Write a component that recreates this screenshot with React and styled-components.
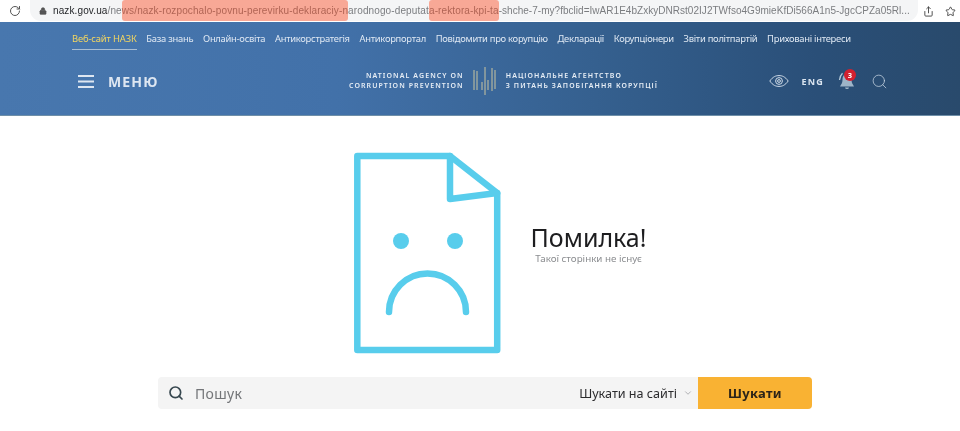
import styled, { createGlobalStyle } from "styled-components";
import { Search, RotateCw, Lock, Share, Star, ChevronDown } from "lucide-react";

const GlobalStyle = createGlobalStyle`
  html, body {
    margin: 0;
    padding: 0;
    background: #ffffff;
  }
  * {
    box-sizing: border-box;
  }
`;

const Page = styled.div`
  width: 960px;
  height: 431px;
  overflow: hidden;
  background: #fff;
  font-family: "Noto Sans", "Open Sans", sans-serif;
  filter: blur(0.3px);
`;

const BrowserBar = styled.div`
  height: 22px;
  display: flex;
  align-items: center;
  padding-left: 9px;
  background: #fff;
  color: #555;
`;

const AddressBar = styled.div`
  width: 888px;
  height: 21px;
  margin-left: 9px;
  padding-left: 9px;
  align-self: flex-start;
  display: flex;
  align-items: center;
  gap: 6px;
  background: #f4f5f6;
  border-radius: 0 0 11px 11px;
  font-family: "Liberation Sans", Arial, sans-serif;
  font-size: 10px;
  letter-spacing: 0.12px;
  white-space: nowrap;
  overflow: hidden;
`;

const Url = styled.span`
  color: #7b7d80;
`;

const Domain = styled.span`
  color: #26282b;
`;

const Marked = styled.span`
  display: inline-block;
  line-height: 21px;
  background: #f8a896;
  color: #b06454;
  border-radius: 3px;
`;

const UrlTail = styled.span`
  letter-spacing: 0.03px;
`;

const BarActions = styled.div`
  margin-left: 5px;
  display: flex;
  gap: 11px;
  align-items: center;
  color: #444;
`;

const Header = styled.header`
  height: 94px;
  background: linear-gradient(90deg, #4877ae 0%, #4271a9 35%, #35608f 62%, #2a4f78 85%, #294a6c 100%);
  border-bottom: 1px solid #6f8fa8;
  color: #e8eef6;
`;

const TopNav = styled.nav`
  height: 29px;
  padding: 0 0 0 72px;
  display: flex;
  align-items: flex-start;
  gap: 9.75px;
`;

const NavLink = styled.a`
  height: 28px;
  line-height: 33px;
  font-size: 9.4px;
  letter-spacing: ${(p) => (p.$active ? "-0.15px" : "-0.27px")};
  white-space: nowrap;
  color: ${(p) => (p.$active ? "#f4d65f" : "#dfe8f3")};
  border-bottom: ${(p) => (p.$active ? "1px solid #a9bdd2" : "none")};
`;

const MainRow = styled.div`
  height: 60px;
  padding: 0 72px 0 78px;
  display: flex;
  align-items: center;
`;

const MenuButton = styled.div`
  width: 90px;
  display: flex;
  align-items: center;
  gap: 14px;
  font-size: 14px;
  font-weight: 700;
  letter-spacing: 1.1px;
  color: #dde6f1;
`;

const Brand = styled.div`
  display: flex;
  align-items: center;
  gap: 9px;
  margin-left: 181px;
`;

const BrandText = styled.div`
  font-size: 7px;
  font-weight: 600;
  line-height: 10px;
  letter-spacing: 1.08px;
  white-space: nowrap;
  text-align: ${(p) => p.$align};
  color: #e6edf5;
`;

const Tools = styled.div`
  margin-left: auto;
  display: flex;
  align-items: center;
  gap: 13px;
  color: #cfdbe8;
`;

const Lang = styled.span`
  font-size: 9px;
  font-weight: 700;
  letter-spacing: 1.2px;
  color: #dbe5f0;
`;

const BellWrap = styled.div`
  position: relative;
  width: 18px;
  height: 20px;
  margin: 0 2px 0 1px;
`;

const Badge = styled.span`
  position: absolute;
  top: -2px;
  right: 0;
  width: 12px;
  height: 12px;
  border-radius: 50%;
  background: #d3202f;
  color: #fff;
  font-size: 7.5px;
  font-weight: 700;
  line-height: 12px;
  text-align: center;
`;

const Content = styled.main`
  display: flex;
  flex-direction: column;
  align-items: center;
`;

const ErrorBlock = styled.section`
  height: 261px;
  padding: 36px 0 0 40px;
  display: flex;
  align-items: flex-start;
  gap: 29px;
`;

const ErrorText = styled.div`
  margin-top: 69px;
  display: flex;
  flex-direction: column;
  align-items: center;
`;

const Title = styled.h1`
  margin: 0;
  font-size: 25px;
  line-height: 32px;
  font-weight: 400;
  color: #1d1d1f;
  white-space: nowrap;
`;

const Subtitle = styled.p`
  margin: 0;
  font-size: 9.8px;
  line-height: 11px;
  color: #8b8d90;
  white-space: nowrap;
`;

const SearchBar = styled.form`
  width: 654px;
  height: 32px;
  margin-left: 10px;
  display: flex;
  align-items: center;
  background: #f4f4f4;
  border-radius: 4px;
`;

const SearchField = styled.div`
  flex: 1;
  padding-left: 10px;
  display: flex;
  align-items: center;
  gap: 11px;
  font-size: 14px;
  letter-spacing: 0.3px;
  color: #737578;
  svg {
    color: #37474f;
  }
`;

const Scope = styled.div`
  display: flex;
  align-items: center;
  gap: 6px;
  padding-right: 5px;
  font-size: 12.6px;
  color: #2b2b2d;
  white-space: nowrap;
  svg {
    color: #a3a5a8;
  }
`;

const SubmitButton = styled.button`
  width: 114px;
  height: 32px;
  border: none;
  border-radius: 0 4px 4px 0;
  background: #f9b233;
  color: #2c2418;
  font-family: inherit;
  font-size: 13px;
  font-weight: 700;
  letter-spacing: 0.3px;
`;

// tan equalizer bars of the agency logo: x, top, bottom
const bars = [
  [1, 4, 24], [4, 5, 24], [9, 16, 24], [12, 1, 29], [15, 14, 24], [19, 2, 25], [22, 4, 23],
];

const Logo = () => (
  <svg width="24" height="30" viewBox="0 0 24 30" fill="none">
    {bars.map(([x, y1, y2]) => (
      <line key={x} x1={x} x2={x} y1={y1} y2={y2} stroke="#c9c5a0" strokeWidth="1" />
    ))}
  </svg>
);

const Burger = () => (
  <svg width="16" height="13" viewBox="0 0 16 13" stroke="currentColor" strokeWidth="2">
    <line x1="0" x2="16" y1="1" y2="1" />
    <line x1="0" x2="16" y1="6.5" y2="6.5" />
    <line x1="0" x2="16" y1="12" y2="12" />
  </svg>
);

const EyeIcon = () => (
  <svg width="20" height="12" viewBox="0 0 20 12" fill="none" stroke="currentColor" strokeWidth="1">
    <path d="M0.8 6 C4 1.5 7 0.6 10 0.6 C13 0.6 16 1.5 19.2 6 C16 10.5 13 11.4 10 11.4 C7 11.4 4 10.5 0.8 6 Z" />
    <circle cx="10" cy="6" r="3.4" />
    <circle cx="10" cy="6" r="1.4" />
  </svg>
);

const BellIcon = () => (
  <svg width="18" height="20" viewBox="0 0 18 20">
    <path d="M9 3 C5.5 3 4.5 6 4.5 9 C4.5 12 3 13.5 2 15.5 H16 C15 13.5 13.5 12 13.5 9 C13.5 6 12.5 3 9 3 Z" fill="#9db4c8" />
    <path d="M7 16.5 C7.3 18.5 10.7 18.5 11 16.5 Z" fill="#9db4c8" />
    <path d="M1.5 9 C1.8 6 2.8 3.8 4.5 2.2" fill="none" stroke="#b6cad9" strokeWidth="1.3" />
  </svg>
);

const SadFile = () => (
  <svg width="148" height="202" viewBox="0 0 148 202" fill="none" stroke="#58cdec" strokeLinejoin="round" strokeLinecap="round">
    <path d="M96 4 H3.3 V198 H143.2 V41 Z" strokeWidth="6.5" />
    <path d="M96 4 V47 L143.2 41" strokeWidth="6.5" />
    <circle cx="47" cy="89" r="8" fill="#58cdec" stroke="none" />
    <circle cx="101" cy="89" r="8" fill="#58cdec" stroke="none" />
    <path d="M35 160 A38.5 38.5 0 0 1 112 160" strokeWidth="6.5" />
  </svg>
);

const navItems = [
  "База знань", "Онлайн-освіта", "Антикорстратегія", "Антикорпортал",
  "Повідомити про корупцію", "Декларації", "Корупціонери", "Звіти політпартій", "Приховані інтереси",
];

export default function App() {
  return (
    <Page>
      <GlobalStyle />
      <BrowserBar>
        <RotateCw size={12} strokeWidth={2} />
        <AddressBar>
          <Lock size={8} fill="#555" strokeWidth={2} />
          <Url>
            <Domain>nazk.gov.ua</Domain>/ne
            <Marked>ws/nazk-rozpochalo-povnu-perevirku-deklaraciy-n</Marked>
            arodnogo-deputat
            <Marked>a-rektora-kpi-ta</Marked>
            <UrlTail>-shche-7-my?fbclid=IwAR1E4bZxkyDNRst02IJ2TWfso4G9mieKfDi566A1n5-JgcCPZa05Rl...</UrlTail>
          </Url>
        </AddressBar>
        <BarActions>
          <Share size={11} />
          <Star size={11} />
        </BarActions>
      </BrowserBar>

      <Header>
        <TopNav>
          <NavLink $active>Веб-сайт НАЗК</NavLink>
          {navItems.map((item) => (
            <NavLink key={item}>{item}</NavLink>
          ))}
        </TopNav>
        <MainRow>
          <MenuButton>
            <Burger />
            <span>МЕНЮ</span>
          </MenuButton>
          <Brand>
            <BrandText $align="right">
              NATIONAL AGENCY ON
              <br />
              CORRUPTION PREVENTION
            </BrandText>
            <Logo />
            <BrandText $align="left">
              НАЦІОНАЛЬНЕ АГЕНТСТВО
              <br />З ПИТАНЬ ЗАПОБІГАННЯ КОРУПЦІЇ
            </BrandText>
          </Brand>
          <Tools>
            <EyeIcon />
            <Lang>ENG</Lang>
            <BellWrap>
              <BellIcon />
              <Badge>3</Badge>
            </BellWrap>
            <Search size={17} strokeWidth={1} />
          </Tools>
        </MainRow>
      </Header>

      <Content>
        <ErrorBlock>
          <SadFile />
          <ErrorText>
            <Title>Помилка!</Title>
            <Subtitle>Такої сторінки не існує</Subtitle>
          </ErrorText>
        </ErrorBlock>
        <SearchBar>
          <SearchField>
            <Search size={16} strokeWidth={2.5} />
            <span>Пошук</span>
          </SearchField>
          <Scope>
            Шукати на сайті
            <ChevronDown size={10} />
          </Scope>
          <SubmitButton type="button">Шукати</SubmitButton>
        </SearchBar>
      </Content>
    </Page>
  );
}
